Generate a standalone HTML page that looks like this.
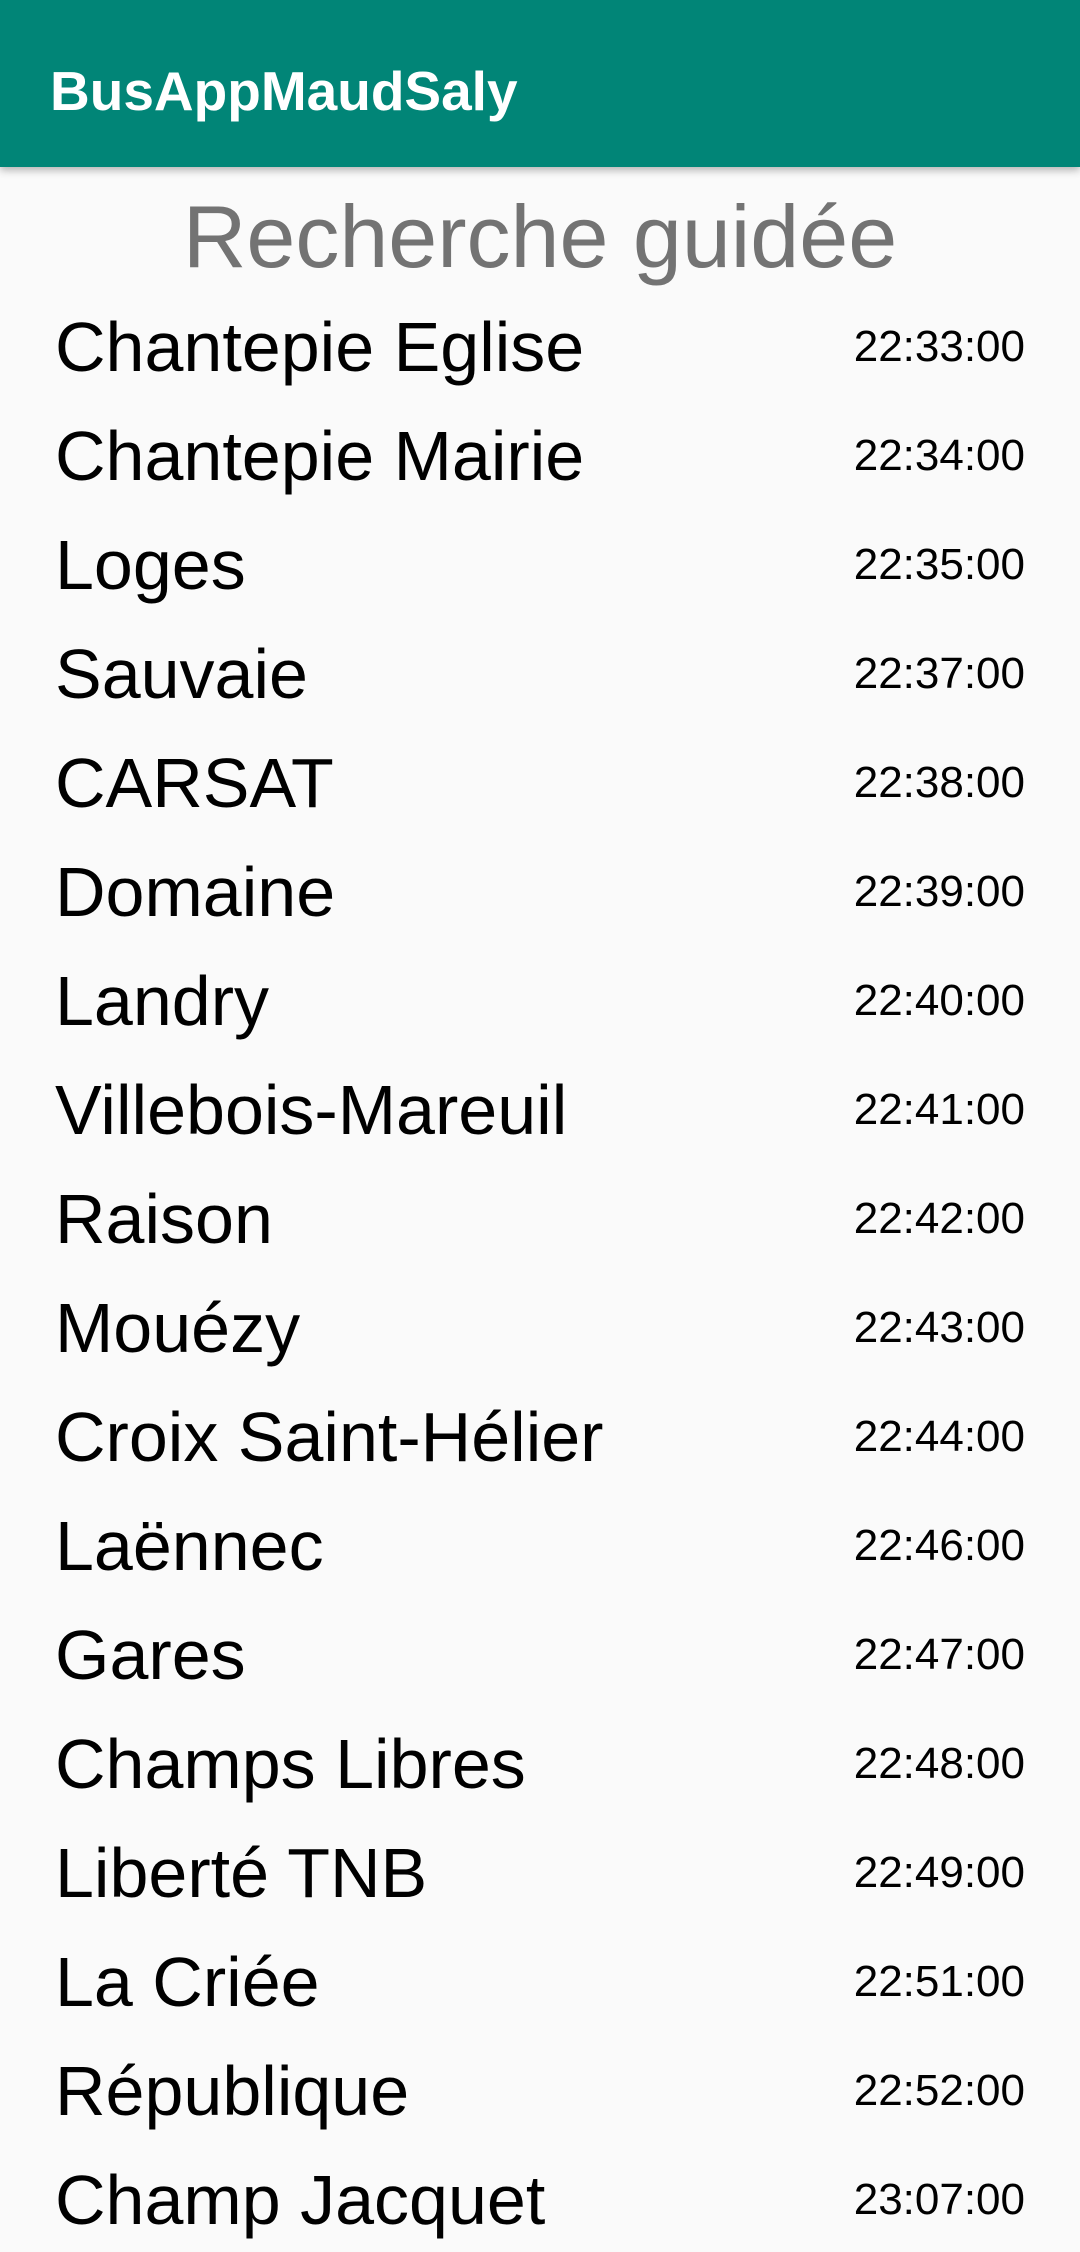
<!DOCTYPE html>
<html><head><meta charset="utf-8"><style>
html,body{margin:0;padding:0;}
body{width:1080px;height:2252px;background:#fafafa;font-family:"Liberation Sans",sans-serif;position:relative;overflow:hidden;}
.bar{position:absolute;left:0;top:0;width:1080px;height:167px;background:#018577;box-shadow:0 3px 8px rgba(0,0,0,0.3);}
.bar span{position:absolute;left:50px;top:108px;transform:translateY(-80%);color:#fff;font-size:55px;font-weight:bold;line-height:1;}
.h{position:absolute;left:0;width:1080px;text-align:center;top:193px;font-size:88px;color:#737373;line-height:1;}
.n{position:absolute;left:55px;font-size:70px;line-height:1;color:#000;}
.t{position:absolute;right:55px;font-size:44px;line-height:1;color:#000;}
</style></head><body>
<div class="bar"><span>BusAppMaudSaly</span></div>
<div class="h">Recherche guidée</div>
<div id="list"></div>
<script>
var d=[["Chantepie Eglise","22:33:00"],["Chantepie Mairie","22:34:00"],["Loges","22:35:00"],["Sauvaie","22:37:00"],["CARSAT","22:38:00"],["Domaine","22:39:00"],["Landry","22:40:00"],["Villebois-Mareuil","22:41:00"],["Raison","22:42:00"],["Mouézy","22:43:00"],["Croix Saint-Hélier","22:44:00"],["Laënnec","22:46:00"],["Gares","22:47:00"],["Champs Libres","22:48:00"],["Liberté TNB","22:49:00"],["La Criée","22:51:00"],["République","22:52:00"],["Champ Jacquet","23:07:00"]];
var h="";
for(var i=0;i<d.length;i++){var b=375+109*i;
h+='<div class="n" style="top:'+(b-63)+'px">'+d[i][0]+'</div><div class="t" style="top:'+(b-10-40)+'px">'+d[i][1]+'</div>';}
document.getElementById("list").innerHTML=h;
</script>
</body></html>
